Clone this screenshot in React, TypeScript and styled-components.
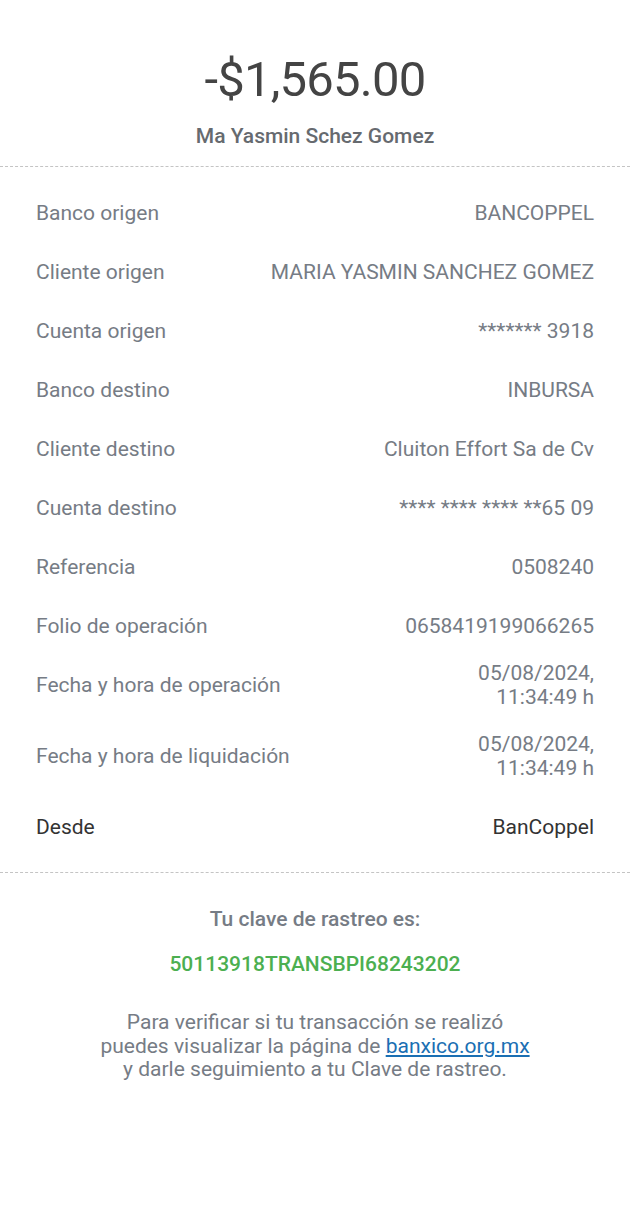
import { createGlobalStyle, styled } from "styled-components";

const GlobalStyle = createGlobalStyle`
  html, body {
    margin: 0;
    padding: 0;
    background: #fff;
  }
  body {
    font-family: Roboto, "Liberation Sans", Arial, sans-serif;
    -webkit-font-smoothing: antialiased;
  }
`;

const Page = styled.div`
  width: 630px;
  min-height: 1219px;
  background: #fff;
`;

const Header = styled.header`
  display: flex;
  flex-direction: column;
  align-items: center;
  padding-top: 52px;
  padding-bottom: 18px;
`;

const Amount = styled.h1`
  margin: 0;
  font-size: 49px;
  line-height: 56px;
  font-weight: 400;
  color: #444;
  letter-spacing: -0.8px;
`;

const Name = styled.div`
  margin-top: 16px;
  font-size: 21px;
  line-height: 24px;
  font-weight: 500;
  color: #666a6f;
`;

const Divider = styled.hr`
  margin: 0;
  border: 0;
  border-top: 1px dashed #c4c4c4;
`;

const Details = styled.div`
  display: flex;
  flex-direction: column;
  padding: 16.5px 36px 15.5px;
`;

const Row = styled.div<{ $pad: number }>`
  display: flex;
  justify-content: space-between;
  align-items: center;
  min-height: 36px;
  padding: ${(p) => p.$pad}px 0;
  gap: 16px;
`;

const Label = styled.span<{ $dark?: boolean }>`
  font-size: 21px;
  line-height: 24px;
  color: ${(p) => (p.$dark ? "#333" : "#767c85")};
  white-space: nowrap;
`;

const Value = styled.span<{ $dark?: boolean }>`
  font-size: 21px;
  line-height: 24px;
  color: ${(p) => (p.$dark ? "#333" : "#767c85")};
  text-align: right;
`;

const Footer = styled.section`
  display: flex;
  flex-direction: column;
  align-items: center;
  padding-top: 34px;
  text-align: center;
`;

const FooterTitle = styled.div`
  font-size: 21px;
  line-height: 24px;
  font-weight: 500;
  color: #767c85;
`;

const TrackingCode = styled.div`
  margin-top: 21px;
  font-size: 21px;
  line-height: 24px;
  font-weight: 500;
  color: #4caf50;
`;

const Note = styled.p`
  margin: 35px 0 0;
  font-size: 21px;
  line-height: 23.5px;
  color: #767c85;
`;

const Link = styled.a`
  color: #1a6fb3;
  text-decoration: underline;
`;

type Item = { label: string; value: React.ReactNode; dark?: boolean; pad?: number };

const dateTime = (
  <>
    05/08/2024,
    <br />
    11:34:49 h
  </>
);

const items: Item[] = [
  { label: "Banco origen", value: "BANCOPPEL" },
  { label: "Cliente origen", value: "MARIA YASMIN SANCHEZ GOMEZ" },
  { label: "Cuenta origen", value: "******* 3918" },
  { label: "Banco destino", value: "INBURSA" },
  { label: "Cliente destino", value: "Cluiton Effort Sa de Cv" },
  { label: "Cuenta destino", value: "**** **** **** **65 09" },
  { label: "Referencia", value: "0508240" },
  { label: "Folio de operación", value: "0658419199066265" },
  { label: "Fecha y hora de operación", value: dateTime, pad: 5.5 },
  { label: "Fecha y hora de liquidación", value: dateTime, pad: 17.5 },
  { label: "Desde", value: "BanCoppel", dark: true },
];

export default function App() {
  return (
    <Page>
      <GlobalStyle />
      <Header>
        <Amount>-$1,565.00</Amount>
        <Name>Ma Yasmin Schez Gomez</Name>
      </Header>
      <Divider />
      <Details>
        {items.map((it) => (
          <Row key={it.label} $pad={it.pad ?? 11.5}>
            <Label $dark={it.dark}>{it.label}</Label>
            <Value $dark={it.dark}>{it.value}</Value>
          </Row>
        ))}
      </Details>
      <Divider />
      <Footer>
        <FooterTitle>Tu clave de rastreo es:</FooterTitle>
        <TrackingCode>50113918TRANSBPI68243202</TrackingCode>
        <Note>
          Para verificar si tu transacción se realizó
          <br />
          puedes visualizar la página de <Link href="#">banxico.org.mx</Link>
          <br />
          y darle seguimiento a tu Clave de rastreo.
        </Note>
      </Footer>
    </Page>
  );
}
